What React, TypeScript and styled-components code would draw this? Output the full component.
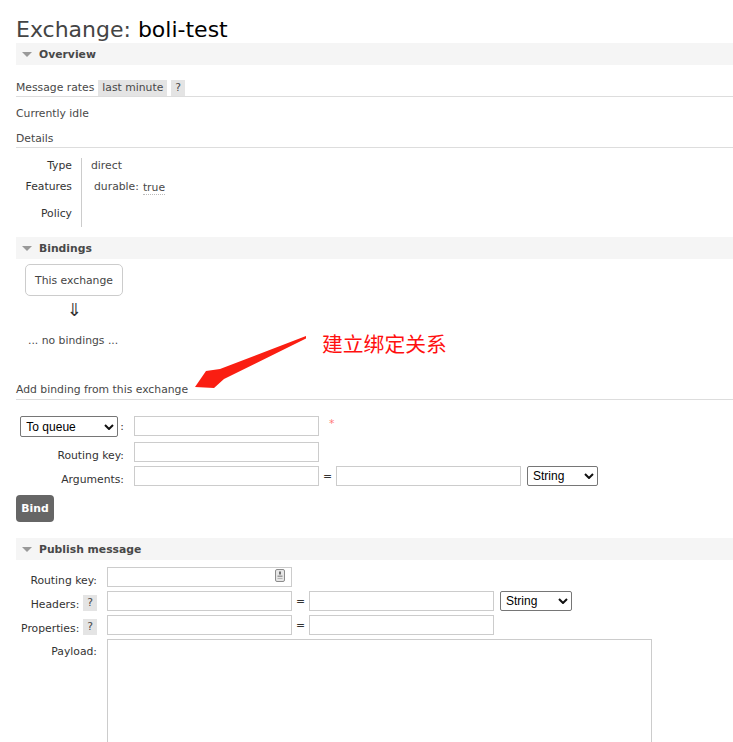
import React from 'react';
import styled, { createGlobalStyle } from 'styled-components';

const GlobalStyle = createGlobalStyle`
  html, body {
    margin: 0;
    padding: 0;
    overflow: hidden;
    background: #fff;
  }
  body {
    font-family: "DejaVu Sans", Verdana, sans-serif;
    font-size: 10.8px;
    color: #484848;
  }
`;

const Page = styled.div`
  position: relative;
  padding-left: 16px;
`;

const Title = styled.h1`
  margin: 0;
  padding-top: 17px;
  font-size: 22px;
  line-height: 26px;
  font-weight: normal;
  color: #444;
  b {
    font-weight: normal;
    color: #000;
  }
`;

const SectionHeader = styled.div<{ $mt?: number }>`
  display: flex;
  align-items: center;
  gap: 7px;
  height: 22px;
  margin-top: ${p => p.$mt ?? 0}px;
  padding-left: 6px;
  background: #f5f5f5;
  font-weight: bold;
  color: #484848;
`;

const Triangle = styled.span`
  width: 0;
  height: 0;
  border-left: 5px solid transparent;
  border-right: 5px solid transparent;
  border-top: 5px solid #999;
`;

const RuledRow = styled.div<{ $mt: number; $h: number }>`
  display: flex;
  align-items: flex-start;
  height: ${p => p.$h}px;
  margin-top: ${p => p.$mt}px;
  line-height: 16px;
  border-bottom: 1px solid #ddd;
`;

const Badge = styled.span`
  display: inline-block;
  margin-left: 4px;
  padding: 0 4px;
  line-height: 16px;
  background: #e4e4e4;
  color: #484848;
`;

const Para = styled.div<{ $mt: number; $pl?: number }>`
  margin-top: ${p => p.$mt}px;
  padding-left: ${p => p.$pl ?? 0}px;
  line-height: 16px;
`;

const FactGrid = styled.div`
  display: grid;
  grid-template-columns: 65px auto;
  grid-template-rows: 14px 28px 27px;
  margin-top: 10px;
`;

const FactLabel = styled.div`
  display: flex;
  align-items: center;
  justify-content: flex-end;
  padding-right: 9px;
  color: #333;
`;

const FactValue = styled.div<{ $indent?: number }>`
  display: flex;
  align-items: center;
  padding-left: ${p => 9 + (p.$indent ?? 0)}px;
  border-left: 1px solid #ccc;
`;

const Abbr = styled.span`
  margin-left: 4px;
  margin-top: 4px;
  line-height: 12px;
  border-bottom: 1px dotted #bbb;
`;

const ExchangeBox = styled.div`
  display: flex;
  align-items: center;
  justify-content: center;
  box-sizing: border-box;
  width: 98px;
  height: 32px;
  margin: 5px 0 0 9px;
  padding-top: 1px;
  border: 1px solid #ccc;
  border-radius: 5px;
  color: #444;
`;

const DownArrow = styled.div`
  width: 98px;
  margin: 4px 0 0 9px;
  text-align: center;
  font-size: 18px;
  line-height: 20px;
  color: #333;
`;

const FormRow = styled.div<{ $mt: number; $h: number; $top?: boolean }>`
  display: flex;
  align-items: ${p => (p.$top ? 'flex-start' : 'center')};
  height: ${p => p.$h}px;
  margin-top: ${p => p.$mt}px;
`;

const LabelCell = styled.div<{ $w: number; $pt?: number }>`
  display: flex;
  align-items: ${p => (p.$pt !== undefined ? 'flex-start' : 'flex-end')};
  justify-content: flex-end;
  gap: 1px;
  box-sizing: border-box;
  width: ${p => p.$w}px;
  align-self: stretch;
  margin-bottom: ${p => (p.$pt !== undefined ? 0 : -2)}px;
  padding-right: 10px;
  padding-top: ${p => p.$pt ?? 0}px;
  color: #333;
  line-height: 16px;
  white-space: nowrap;
`;

const HelpBadge = styled(Badge)`
  margin-left: 3px;
  margin-bottom: 2px;
`;

const TextInput = styled.input`
  box-sizing: border-box;
  width: 185px;
  height: 20px;
  margin: 0;
  padding: 0 3px;
  border: 1px solid #ccc;
  border-radius: 0;
  font: inherit;
  background: #fff;
  outline: none;
`;

const InputWrap = styled.div`
  position: relative;
  display: flex;
`;

const AutofillIcon = styled.svg`
  position: absolute;
  top: 2px;
  right: 7px;
`;

const Eq = styled.span`
  width: 17px;
  text-align: center;
  color: #333;
`;

const Required = styled.span`
  margin-left: 10px;
  margin-top: -6px;
  color: #f77;
`;

const SelectWrap = styled.div<{ $w: number; $ml?: number }>`
  position: relative;
  display: flex;
  width: ${p => p.$w}px;
  margin-left: ${p => p.$ml ?? 0}px;
`;

const Select = styled.select<{ $h: number }>`
  appearance: none;
  -webkit-appearance: none;
  box-sizing: border-box;
  width: 100%;
  height: ${p => p.$h}px;
  margin: 0;
  padding: 0 0 0 5px;
  border: 1px solid #767676;
  border-radius: 2px;
  background: #fff;
  color: #000;
  font-family: "Liberation Sans", Arial, sans-serif;
  font-size: 12px;
  outline: none;
`;

const Chevron = styled.svg`
  position: absolute;
  right: 4px;
  top: 50%;
  margin-top: -3px;
  pointer-events: none;
`;

const Colon = styled.span`
  align-self: center;
  margin-left: 1px;
`;

const BindButton = styled.button`
  display: block;
  width: 38px;
  height: 27px;
  margin-top: 9px;
  padding: 0;
  border: none;
  border-radius: 4px;
  background: #666;
  color: #fff;
  font: bold 10.8px "DejaVu Sans", Verdana, sans-serif;
`;

const Payload = styled.textarea`
  box-sizing: border-box;
  width: 545px;
  height: 180px;
  margin: 0;
  border: 1px solid #ccc;
  resize: none;
  font: inherit;
  outline: none;
`;

const Note = styled.div`
  position: absolute;
  left: 322px;
  top: 333px;
  font-family: "Noto Sans CJK SC", "Noto Sans CJK JP", sans-serif;
  font-size: 20.8px;
  line-height: 1;
  color: #ff1010;
`;

const NoteArrow = styled.svg`
  position: absolute;
  left: 190px;
  top: 330px;
`;

const ChevronIcon = () => (
  <Chevron width="10" height="6" viewBox="0 0 10 6">
    <path d="M1 1 L5 5 L9 1" fill="none" stroke="#111" strokeWidth="2" />
  </Chevron>
);

const TypeSelect = ({ value, w, h, ml }: { value: string; w: number; h: number; ml?: number }) => (
  <SelectWrap $w={w} $ml={ml}>
    <Select $h={h} defaultValue={value}>
      <option>{value}</option>
    </Select>
    <ChevronIcon />
  </SelectWrap>
);

export default function App() {
  return (
    <Page>
      <GlobalStyle />
      <Title>
        Exchange: <b>boli-test</b>
      </Title>

      <SectionHeader>
        <Triangle />
        Overview
      </SectionHeader>
      <RuledRow $mt={15} $h={16}>
        Message rates
        <Badge>last minute</Badge>
        <Badge>?</Badge>
      </RuledRow>
      <Para $mt={9}>Currently idle</Para>
      <RuledRow $mt={9} $h={16}>Details</RuledRow>
      <FactGrid>
        <FactLabel>Type</FactLabel>
        <FactValue>direct</FactValue>
        <FactLabel>Features</FactLabel>
        <FactValue $indent={3}>
          durable:<Abbr>true</Abbr>
        </FactValue>
        <FactLabel>Policy</FactLabel>
        <FactValue />
      </FactGrid>

      <SectionHeader $mt={10}>
        <Triangle />
        Bindings
      </SectionHeader>
      <ExchangeBox>This exchange</ExchangeBox>
      <DownArrow>⇓</DownArrow>
      <Para $mt={13} $pl={12}>... no bindings ...</Para>

      <RuledRow $mt={33} $h={17}>Add binding from this exchange</RuledRow>
      <FormRow $mt={15} $h={22}>
        <LabelCell $w={118} $pt={1}>
          <TypeSelect value="To queue" w={98} h={21} />
          <Colon>:</Colon>
        </LabelCell>
        <TextInput />
        <Required>*</Required>
      </FormRow>
      <FormRow $mt={5} $h={20}>
        <LabelCell $w={118}>Routing key:</LabelCell>
        <TextInput />
      </FormRow>
      <FormRow $mt={4} $h={20}>
        <LabelCell $w={118}>Arguments:</LabelCell>
        <TextInput />
        <Eq>=</Eq>
        <TextInput />
        <TypeSelect value="String" w={71} h={20} ml={6} />
      </FormRow>
      <BindButton>Bind</BindButton>

      <SectionHeader $mt={16}>
        <Triangle />
        Publish message
      </SectionHeader>
      <FormRow $mt={7} $h={20}>
        <LabelCell $w={91}>Routing key:</LabelCell>
        <InputWrap>
          <TextInput />
          <AutofillIcon width="10" height="13" viewBox="0 0 10 13">
            <rect x="0.5" y="0.5" width="9" height="12" rx="1.5" fill="#e6e6e6" stroke="#8c8c8c" />
            <rect x="4" y="2.5" width="2" height="3" fill="#707070" />
            <rect x="2.5" y="6.5" width="5" height="1.5" fill="#9a9a9a" />
            <rect x="2.5" y="9" width="5" height="1" fill="#b5b5b5" />
          </AutofillIcon>
        </InputWrap>
      </FormRow>
      <FormRow $mt={4} $h={20}>
        <LabelCell $w={91}>
          Headers:<HelpBadge>?</HelpBadge>
        </LabelCell>
        <TextInput />
        <Eq>=</Eq>
        <TextInput />
        <TypeSelect value="String" w={72} h={20} ml={6} />
      </FormRow>
      <FormRow $mt={4} $h={20}>
        <LabelCell $w={91}>
          Properties:<HelpBadge>?</HelpBadge>
        </LabelCell>
        <TextInput />
        <Eq>=</Eq>
        <TextInput />
      </FormRow>
      <FormRow $mt={4} $h={180} $top>
        <LabelCell $w={91} $pt={5}>Payload:</LabelCell>
        <Payload />
      </FormRow>

      <NoteArrow width="120" height="62" viewBox="0 0 120 62">
        <polygon points="116,6 30,39 16,41 5,57 24,58 34,49 116,8.5" fill="#fa1e12" />
      </NoteArrow>
      <Note>建立绑定关系</Note>
    </Page>
  );
}
